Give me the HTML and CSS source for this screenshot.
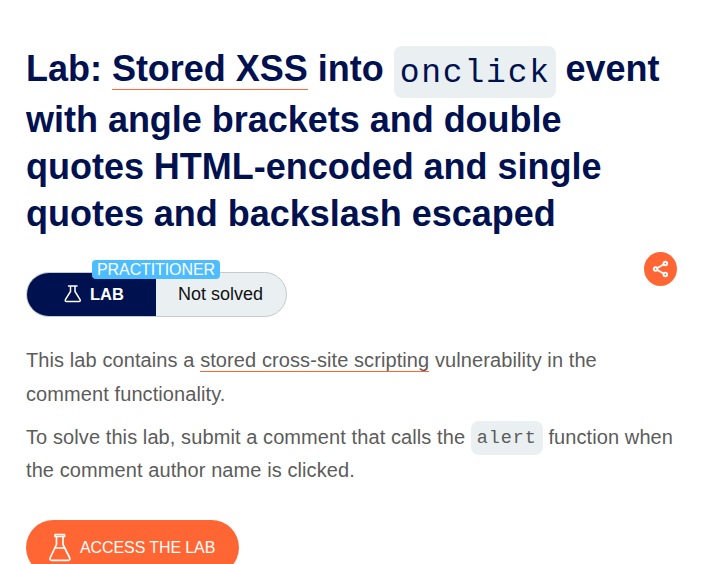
FILE: index.html
```
<!DOCTYPE html>
<html lang="en">
<head>
<meta charset="utf-8">
<title>Lab: Stored XSS</title>
<link rel="stylesheet" href="styles.css">
</head>
<body>
<main class="page">
  <h1 class="title">
    <span class="line first">Lab: <a class="link">Stored XSS</a> into <code class="code big">onclick</code> event</span>
    <span class="line">with angle brackets and double</span>
    <span class="line">quotes HTML-encoded and single</span>
    <span class="line">quotes and backslash escaped</span>
  </h1>
  <div class="status-row">
    <div class="status">
      <div class="kind">
        <svg class="flask-small" width="18" height="18" viewBox="0 0 18 18" fill="none" stroke="#fff" stroke-width="1.500" stroke-linejoin="round" stroke-linecap="round"><path d="M4.500 1h8.500M6.500 1v5.500L1.400 14.700Q.8 16.500 2.600 16.500h12.300Q16.700 16.500 16.100 14.700L11 6.500V1"/></svg>
        <span>LAB</span>
      </div>
      <div class="state">Not solved</div>
      <span class="level">PRACTITIONER</span>
    </div>
    <div class="share">
      <svg width="33" height="34" viewBox="0 0 33 34" fill="none" stroke="#fff" stroke-width="1.900"><circle cx="11.600" cy="17" r="1.800"/><circle cx="21.300" cy="11.600" r="1.800"/><circle cx="21.300" cy="22.400" r="1.800"/><path d="M13.200 16l6.400-3.500M13.200 18l6.400 3.500"/></svg>
    </div>
  </div>
  <p class="text">
    <span class="row">This lab contains a <a class="link">stored cross-site scripting</a> vulnerability in the</span>
    <span class="row">comment functionality.</span>
  </p>
  <p class="text">
    <span class="row">To solve this lab, submit a comment that calls the <code class="code small">alert</code> function when</span>
    <span class="row">the comment author name is clicked.</span>
  </p>
  <a class="button">
    <svg width="24" height="29" viewBox="0 0 24 29" fill="none" stroke="#fff" stroke-width="1.700" stroke-linejoin="round"><path d="M7 1.500h9.500v2H7zM8.500 3.500v8L2.300 24.500Q1.100 27.300 3.800 27.300H20Q22.700 27.300 21.500 24.500L15 11.500v-8M6.900 15h9.800"/></svg>
    <span>ACCESS THE LAB</span>
  </a>
</main>
</body>
</html>
```
FILE: styles.css
```
body {
  margin: 0;
  height: 564px;
  overflow: hidden;
  background: #fff;
  font-family: "Liberation Sans", Arial, sans-serif;
}
.page {
  padding: 46px 26px 0;
}
.title {
  margin: 0;
  color: #00114f;
  font-size: 36px;
  letter-spacing: -0.02px;
}
.line {
  display: block;
  height: 47px;
  line-height: 47px;
  white-space: nowrap;
}
.first {
  height: 50px;
  line-height: 45px;
}
.link {
  border-bottom: 1px solid #ff6633;
}
.title .link {
  padding-bottom: 0;
}
.code {
  font-family: "Liberation Mono", "Courier New", monospace;
  font-weight: 400;
  background: #eaf0f2;
  border-radius: 8px;
}
.big {
  display: inline-block;
  box-sizing: border-box;
  width: 162px;
  height: 52px;
  padding: 0 6px;
  font-size: 33px;
  letter-spacing: 1.8px;
  line-height: 56px;
  vertical-align: top;
}
.status-row {
  display: flex;
  justify-content: space-between;
  margin-top: 35px;
}
.status {
  position: relative;
  display: flex;
  box-sizing: border-box;
  width: 261px;
  height: 45px;
  border: 1px solid #c5cbcd;
  border-radius: 23px;
  background: #eaf0f2;
  font-size: 18px;
  line-height: 43px;
}
.kind {
  display: flex;
  align-items: center;
  gap: 8px;
  box-sizing: border-box;
  width: 129px;
  padding-left: 37px;
  border-radius: 22px 0 0 22px;
  background: #00114f;
  color: #fff;
  font-size: 16.5px;
  font-weight: 700;
}
.flask-small {
  margin-bottom: 2px;
}
.state {
  flex: 1;
  padding-left: 22px;
  color: #111;
}
.level {
  position: absolute;
  left: 65px;
  top: -13px;
  width: 128px;
  height: 19px;
  border-radius: 4px;
  background: #4dbdff;
  color: #fff;
  font-size: 16px;
  letter-spacing: -0.1px;
  line-height: 19px;
  text-align: center;
}
.share {
  width: 33px;
  height: 34px;
  margin: -20px 11px 0 0;
  align-self: flex-start;
  border-radius: 50%;
  background: #ff6633;
}
.share svg {
  display: block;
}
.text {
  margin: 26px 0 0;
  color: #5c5c5b;
  font-size: 20px;
  letter-spacing: 0.09px;
}
.text + .text {
  margin-top: 10px;
}
.row {
  display: block;
  height: 33.5px;
  line-height: 34px;
  white-space: nowrap;
}
.text + .text .row {
  height: 33px;
}
.small {
  display: inline-block;
  position: relative;
  top: 1px;
  box-sizing: border-box;
  width: 72px;
  height: 34px;
  font-size: 18.5px;
  letter-spacing: 0.9px;
  line-height: 35px;
  text-align: center;
  vertical-align: top;
}
.button {
  display: flex;
  align-items: center;
  gap: 8px;
  box-sizing: border-box;
  width: 213px;
  height: 55px;
  margin-top: 34px;
  padding-left: 22px;
  border-radius: 28px;
  background: #ff6633;
  color: #fff;
  font-size: 16px;
  letter-spacing: -0.1px;
}
```
